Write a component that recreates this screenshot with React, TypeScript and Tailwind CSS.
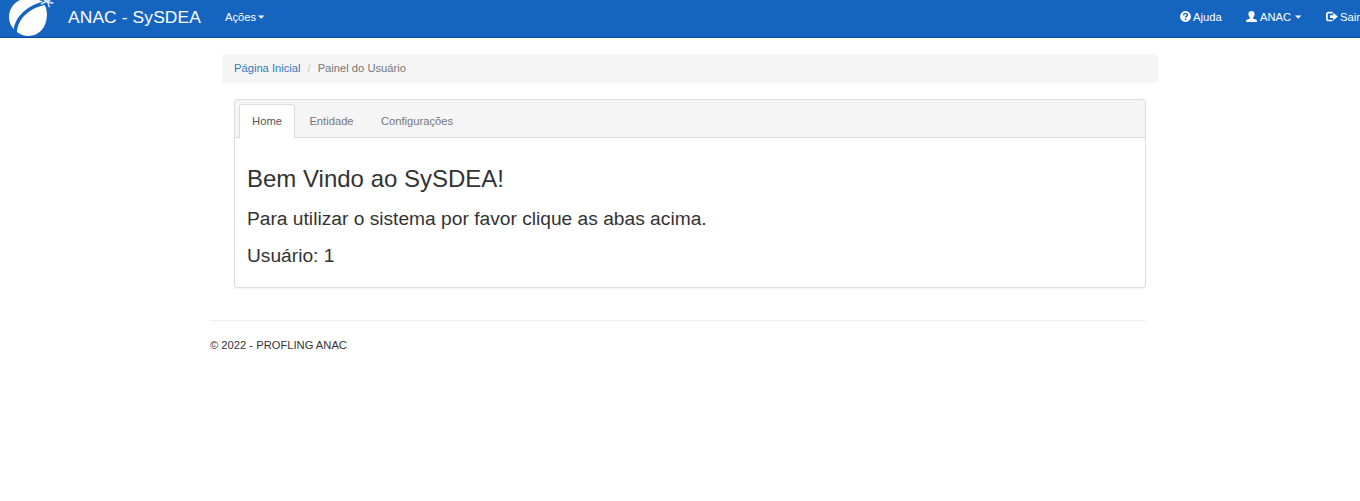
function Logo() {
  return (
    <svg className="block h-[37px] w-[58px]" viewBox="0 0 58 37">
      <path
        fill="#fff"
        d="M27.5 -1.5 C34 -1.5 39 -0.5 43 1.8 C31 4.2 15.5 14.5 13.8 29.3 C10.8 26 9 21.9 9 16.8 C9 6.7 17.4 -1.5 27.5 -1.5 Z"
      />
      <path
        fill="#fff"
        d="M44.6 5 C46.4 8.2 47 11.8 46.9 15.8 C46.5 27.4 39 36 28.5 36 C24.3 36 20.3 34.6 17 32 C17.2 20.5 28 8.5 44.6 5 Z"
      />
      <path
        fill="none"
        stroke="#e3edf8"
        strokeWidth="1.4"
        d="M41 4 L50.5 -0.5 M43.5 -0.5 L47.2 1.8 L53.3 3.2 M47.5 1.5 L49.5 7.3"
      />
    </svg>
  );
}

function HelpIcon() {
  return (
    <svg className="block h-[11px] w-[11px] -translate-y-px" viewBox="0 0 11 11">
      <circle cx="5.5" cy="5.5" r="5.4" fill="#fff" />
      <path d="M3.7 4.4 V4 C3.7 2.9 4.4 2.4 5.5 2.4 S7.4 3 7.4 4 C7.4 5.2 5.6 5.2 5.6 6.8" fill="none" stroke="#1565c0" strokeWidth="1.4" />
      <path d="M4.8 7.6 H6.4 V9.1 H4.8 Z" fill="#1565c0" />
    </svg>
  );
}

function UserIcon() {
  return (
    <svg className="block h-[11px] w-[11px] -translate-y-px" viewBox="0 0 11 11" fill="#fff">
      <path d="M5.5 0 C7.6 0 8.6 1.2 8.6 3 C8.6 4.5 7.9 5.6 7.1 6.3 V7.4 L10.2 8.8 C10.8 9.1 11 9.5 11 10.9 H0 C0 9.5 0.2 9.1 0.8 8.8 L3.9 7.4 V6.3 C3.1 5.6 2.4 4.5 2.4 3 C2.4 1.2 3.4 0 5.5 0 Z" />
    </svg>
  );
}

function LogoutIcon() {
  return (
    <svg className="block h-[11px] w-[12px] -translate-y-px" viewBox="0 0 12 11">
      <path d="M6.6 1.7 H2.6 Q0.9 1.7 0.9 3.4 V7.8 Q0.9 9.5 2.6 9.5 H6.6" fill="none" stroke="#fff" strokeWidth="1.7" />
      <path d="M7.2 1.8 L11.8 5.6 L7.2 9.4 V6.9 H4 V4.3 H7.2 Z" fill="#fff" />
    </svg>
  );
}

function Caret() {
  return (
    <svg className="block h-[4px] w-[7px]" viewBox="0 0 7 4">
      <path d="M0 0.5 H6.4 L3.2 3.7 Z" fill="#fff" />
    </svg>
  );
}

export default function App() {
  return (
    <div className="h-[501px] overflow-hidden bg-white font-['Liberation_Sans',Arial,sans-serif] text-[11.2px] leading-4 text-[#333]">
      <nav className="flex h-[38px] w-full items-start overflow-hidden border-b border-[#0d47a1] bg-[#1565c0] text-white">
        <Logo />
        <div className="ml-[10px] mt-[9px] w-[157px] whitespace-nowrap text-[17.4px] leading-4 tracking-[0.12px]">ANAC - SySDEA</div>
        <a className="mt-[9px] flex items-center gap-[2px]">Ações<Caret /></a>
        <div className="ml-auto mt-[9px] flex w-[180px] shrink-0 whitespace-nowrap">
          <a className="flex w-[66px] shrink-0 items-center gap-[2px]"><HelpIcon />Ajuda</a>
          <a className="flex w-[80px] shrink-0 items-center gap-[3px]"><UserIcon />ANAC<span className="pl-[1px]"><Caret /></span></a>
          <a className="flex shrink-0 items-center gap-[2px]"><LogoutIcon />Sair</a>
        </div>
      </nav>
      <main className="ml-[210px] w-[936px] pt-4">
        <ol className="ml-3 flex h-[29px] w-[936px] items-center rounded-[3px] bg-[#f5f5f5] px-3 pb-px">
          <li className="text-[#337ab7]">Página Inicial</li>
          <li className="px-[7px] text-[#ccc]">/</li>
          <li className="text-[#777]">Painel do Usuário</li>
        </ol>
        <section className="ml-6 mt-4 h-[189px] w-[912px] rounded-[3px] border border-[#ddd] bg-white shadow-[0_1px_1px_rgba(0,0,0,0.05)]">
          <div className="flex h-[38px] border-b border-[#ddd] bg-[#f5f5f5] pl-1 pt-1 text-[#777]">
            <a className="flex h-[34px] w-[56px] items-center justify-center rounded-t-[3px] border border-b-0 border-[#ddd] bg-white pb-px text-[#555]">Home</a>
            <a className="flex h-[34px] w-[73px] items-center justify-center">Entidade</a>
            <a className="flex h-[34px] w-[98px] items-center justify-center">Configurações</a>
          </div>
          <div className="px-3">
            <h2 className="pt-7 text-[24px] leading-[26px]">Bem Vindo ao SySDEA!</h2>
            <h3 className="pt-4 text-[19.2px] leading-[21px]">Para utilizar o sistema por favor clique as abas acima.</h3>
            <h3 className="pt-4 text-[19.2px] leading-[21px]">Usuário: 1</h3>
          </div>
        </section>
        <hr className="mt-8 border-[#eee]" />
        <footer className="pt-4">© 2022 - PROFLING ANAC</footer>
      </main>
    </div>
  );
}
